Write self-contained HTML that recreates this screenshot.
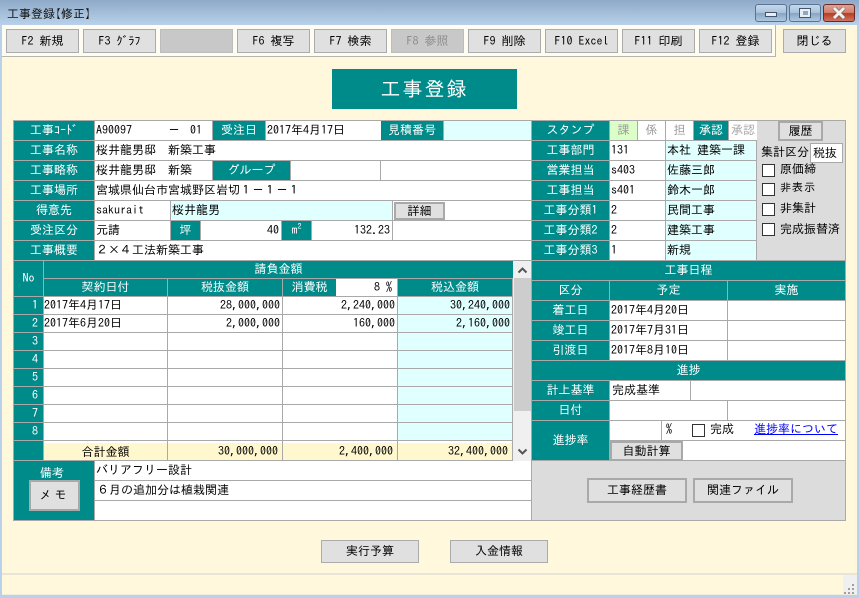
<!DOCTYPE html>
<html lang="ja"><head><meta charset="utf-8"><title>工事登録【修正】</title>
<style>
html,body{margin:0;padding:0;width:859px;height:598px;overflow:hidden;background:#b9d1ea}
body{position:relative;font:12px/19px "IPAGothic","Noto Sans CJK JP","Liberation Sans",sans-serif;color:#000}
div,a{position:absolute;box-sizing:border-box;white-space:nowrap}
.t{background:#008b8b;color:#fff;text-align:center}
.w{background:#fff;padding-left:1px}
.y{background:#e0ffff;padding-left:1px}
.r{text-align:right;padding-right:2px}
.n{padding-right:5px;line-height:17px}
.b{background:#e0e0e0;border:1px solid #ababab;text-align:center}
.b2{background:#e0e0e0;border:2px solid #a9a9a9;text-align:center}
.d{background:#c8c8c8;border-color:#bdbdbd;color:#8c8c8c}
.cb{width:13px;height:13px;background:#fff;border:1px solid #333}
.tl{background:#fff8cf}
</style></head><body>
<div style="left:0;top:0;width:859px;height:25px;background:linear-gradient(#8eaac8,#b9d1ea)"></div>
<div style="left:7px;top:4px;line-height:20px;color:#111">工事登録<span style="margin-left:-6px">【</span>修正<span style="margin-right:-6px">】</span></div>
<div style="left:755px;top:4px;width:32px;height:18px;border:1px solid #5a7390;border-radius:3px;background:linear-gradient(#c6d8ea 0,#a9c3dd 48%,#86a5c4 52%,#afc8e0 100%)"></div>
<div style="left:765px;top:12px;width:12px;height:5px;background:#e8eef4;border:1px solid #44566b"></div>
<div style="left:789px;top:4px;width:32px;height:18px;border:1px solid #5a7390;border-radius:3px;background:linear-gradient(#c6d8ea 0,#a9c3dd 48%,#86a5c4 52%,#afc8e0 100%)"></div>
<div style="left:799px;top:8px;width:12px;height:10px;background:#e8eef4;border:1px solid #44566b"></div>
<div style="left:803px;top:11px;width:5px;height:4px;background:#8ea8c2"></div>
<div style="left:823px;top:4px;width:32px;height:18px;border:1px solid #6b2a2a;border-radius:3px;background:linear-gradient(#dfa193 0,#d27f6c 48%,#b93a22 52%,#cf7660 100%)"></div>
<svg style="position:absolute;left:832px;top:7px" width="14" height="12"><path d="M2 1L12 11M12 1L2 11" stroke="#555" stroke-width="4"/><path d="M2 1L12 11M12 1L2 11" stroke="#f4f0ee" stroke-width="3"/></svg>

<div style="left:2px;top:25px;width:855px;height:570px;background:#fff8dc"></div>
<div style="left:2px;top:25px;width:774px;height:32px;background:#fffdf2;border-bottom:1px solid #b5b5b0;border-right:1px solid #b5b5b0"></div>

<div class="b" style="left:6px;top:29px;width:73px;height:24px;line-height:22px">F2 新規</div>
<div class="b" style="left:83px;top:29px;width:73px;height:24px;line-height:22px">F3 ｸﾞﾗﾌ</div>
<div class="b d" style="left:160px;top:29px;width:73px;height:24px"></div>
<div class="b" style="left:237px;top:29px;width:73px;height:24px;line-height:22px">F6 複写</div>
<div class="b" style="left:314px;top:29px;width:73px;height:24px;line-height:22px">F7 検索</div>
<div class="b d" style="left:391px;top:29px;width:73px;height:24px;line-height:22px">F8 参照</div>
<div class="b" style="left:468px;top:29px;width:73px;height:24px;line-height:22px">F9 削除</div>
<div class="b" style="left:545px;top:29px;width:73px;height:24px;line-height:22px">F10 Excel</div>
<div class="b" style="left:622px;top:29px;width:73px;height:24px;line-height:22px">F11 印刷</div>
<div class="b" style="left:699px;top:29px;width:73px;height:24px;line-height:22px">F12 登録</div>
<div class="b" style="left:783px;top:29px;width:63px;height:24px;line-height:22px">閉じる</div>

<div class="t" style="left:332px;top:69px;width:185px;height:40px;font-size:20px;line-height:40px;letter-spacing:2px">工事登録</div>

<div style="left:13px;top:120px;width:833px;height:401px;background:#a9a9a9"></div>

<!-- left upper -->
<div class="t" style="left:14px;top:121px;width:80px;height:19px">工事ｺｰﾄﾞ</div>
<div class="w" style="left:95px;top:121px;width:117px;height:19px">A90097</div>
<div style="left:168px;top:121px">－</div><div style="left:190px;top:121px">01</div>
<div class="t" style="left:213px;top:121px;width:52px;height:19px">受注日</div>
<div class="w" style="left:266px;top:121px;width:115px;height:19px">2017年4月17日</div>
<div class="t" style="left:381px;top:121px;width:62px;height:19px">見積番号</div>
<div class="y" style="left:444px;top:121px;width:87px;height:19px"></div>

<div class="t" style="left:14px;top:141px;width:80px;height:19px">工事名称</div>
<div class="w" style="left:95px;top:141px;width:436px;height:19px">桜井龍男邸　新築工事</div>

<div class="t" style="left:14px;top:161px;width:80px;height:19px">工事略称</div>
<div class="w" style="left:95px;top:161px;width:117px;height:19px">桜井龍男邸　新築</div>
<div class="t" style="left:213px;top:161px;width:77px;height:19px">グループ</div>
<div class="w" style="left:291px;top:161px;width:89px;height:19px"></div>
<div class="w" style="left:381px;top:161px;width:150px;height:19px"></div>

<div class="t" style="left:14px;top:181px;width:80px;height:19px">工事場所</div>
<div class="w" style="left:95px;top:181px;width:436px;height:19px">宮城県仙台市宮城野区岩切１－１－１</div>

<div class="t" style="left:14px;top:201px;width:80px;height:19px">得意先</div>
<div class="w" style="left:95px;top:201px;width:75px;height:19px">sakurait</div>
<div class="y" style="left:171px;top:201px;width:221px;height:19px">桜井龍男</div>
<div class="w" style="left:393px;top:201px;width:138px;height:19px"></div>
<div class="b2" style="left:394px;top:202px;width:51px;height:18px;line-height:15px">詳細</div>

<div class="t" style="left:14px;top:221px;width:80px;height:19px">受注区分</div>
<div class="w" style="left:95px;top:221px;width:75px;height:19px">元請</div>
<div class="t" style="left:171px;top:221px;width:29px;height:19px">坪</div>
<div class="w r" style="left:201px;top:221px;width:80px;height:19px">40</div>
<div class="t" style="left:282px;top:221px;width:29px;height:19px">m<sup style="font-size:8px;line-height:0">2</sup></div>
<div class="w r" style="left:312px;top:221px;width:80px;height:19px">132.23</div>
<div class="w" style="left:393px;top:221px;width:138px;height:19px"></div>

<div class="t" style="left:14px;top:241px;width:80px;height:19px">工事概要</div>
<div class="w" style="left:95px;top:241px;width:436px;height:19px">２×４工法新築工事</div>

<!-- grid -->
<div class="t" style="left:14px;top:261px;width:29px;height:35px;line-height:35px">No</div>
<div class="t" style="left:44px;top:261px;width:469px;height:17px;line-height:17px">請負金額</div>
<div class="t" style="left:44px;top:279px;width:123px;height:17px;line-height:17px">契約日付</div>
<div class="t" style="left:168px;top:279px;width:114px;height:17px;line-height:17px">税抜金額</div>
<div class="t" style="left:283px;top:279px;width:53px;height:17px;line-height:17px">消費税</div>
<div class="w r" style="left:336px;top:279px;width:61px;height:17px;line-height:17px;padding-right:5px">8 %</div>
<div class="t" style="left:398px;top:279px;width:114px;height:17px;line-height:17px">税込金額</div>

<div class="t r n" style="left:14px;top:297px;width:29px;height:17px">1</div>
<div class="w" style="left:44px;top:297px;width:123px;height:17px;line-height:17px;padding-left:0">2017年4月17日</div>
<div class="w r" style="left:168px;top:297px;width:114px;height:17px;line-height:17px">28,000,000</div>
<div class="w r" style="left:283px;top:297px;width:114px;height:17px;line-height:17px">2,240,000</div>
<div class="y r" style="left:398px;top:297px;width:114px;height:17px;line-height:17px">30,240,000</div>

<div class="t r n" style="left:14px;top:315px;width:29px;height:17px">2</div>
<div class="w" style="left:44px;top:315px;width:123px;height:17px;line-height:17px;padding-left:0">2017年6月20日</div>
<div class="w r" style="left:168px;top:315px;width:114px;height:17px;line-height:17px">2,000,000</div>
<div class="w r" style="left:283px;top:315px;width:114px;height:17px;line-height:17px">160,000</div>
<div class="y r" style="left:398px;top:315px;width:114px;height:17px;line-height:17px">2,160,000</div>

<div class="t r n" style="left:14px;top:333px;width:29px;height:17px">3</div>
<div class="w" style="left:44px;top:333px;width:123px;height:17px"></div><div class="w" style="left:168px;top:333px;width:114px;height:17px"></div><div class="w" style="left:283px;top:333px;width:114px;height:17px"></div><div class="y" style="left:398px;top:333px;width:114px;height:17px"></div>
<div class="t r n" style="left:14px;top:351px;width:29px;height:17px">4</div>
<div class="w" style="left:44px;top:351px;width:123px;height:17px"></div><div class="w" style="left:168px;top:351px;width:114px;height:17px"></div><div class="w" style="left:283px;top:351px;width:114px;height:17px"></div><div class="y" style="left:398px;top:351px;width:114px;height:17px"></div>
<div class="t r n" style="left:14px;top:369px;width:29px;height:17px">5</div>
<div class="w" style="left:44px;top:369px;width:123px;height:17px"></div><div class="w" style="left:168px;top:369px;width:114px;height:17px"></div><div class="w" style="left:283px;top:369px;width:114px;height:17px"></div><div class="y" style="left:398px;top:369px;width:114px;height:17px"></div>
<div class="t r n" style="left:14px;top:387px;width:29px;height:17px">6</div>
<div class="w" style="left:44px;top:387px;width:123px;height:17px"></div><div class="w" style="left:168px;top:387px;width:114px;height:17px"></div><div class="w" style="left:283px;top:387px;width:114px;height:17px"></div><div class="y" style="left:398px;top:387px;width:114px;height:17px"></div>
<div class="t r n" style="left:14px;top:405px;width:29px;height:17px">7</div>
<div class="w" style="left:44px;top:405px;width:123px;height:17px"></div><div class="w" style="left:168px;top:405px;width:114px;height:17px"></div><div class="w" style="left:283px;top:405px;width:114px;height:17px"></div><div class="y" style="left:398px;top:405px;width:114px;height:17px"></div>
<div class="t r n" style="left:14px;top:423px;width:29px;height:17px">8</div>
<div class="w" style="left:44px;top:423px;width:123px;height:17px"></div><div class="w" style="left:168px;top:423px;width:114px;height:17px"></div><div class="w" style="left:283px;top:423px;width:114px;height:17px"></div><div class="y" style="left:398px;top:423px;width:114px;height:17px"></div>

<div class="t" style="left:14px;top:441px;width:29px;height:19px"></div>
<div class="tl" style="left:44px;top:441px;width:123px;height:19px;text-align:center;border-top:2px solid #fff;line-height:19px">合計金額</div>
<div class="tl r" style="left:168px;top:441px;width:114px;height:19px;border-top:2px solid #fff;padding-right:4px;line-height:17px">30,000,000</div>
<div class="tl r" style="left:283px;top:441px;width:114px;height:19px;border-top:2px solid #fff;padding-right:4px;line-height:17px">2,400,000</div>
<div class="tl r" style="left:398px;top:441px;width:114px;height:19px;border-top:2px solid #fff;padding-right:4px;line-height:17px">32,400,000</div>

<!-- scrollbar -->
<div style="left:513px;top:261px;width:18px;height:200px;background:#f0f0f0"></div>
<div style="left:514px;top:278px;width:17px;height:133px;background:#cdcdcd"></div>
<svg style="position:absolute;left:517px;top:266px" width="11" height="8"><path d="M1.5 6.5L5.5 2.5L9.5 6.5" fill="none" stroke="#555" stroke-width="2"/></svg>
<svg style="position:absolute;left:517px;top:448px" width="11" height="8"><path d="M1.5 1.5L5.5 5.5L9.5 1.5" fill="none" stroke="#555" stroke-width="2"/></svg>

<!-- memo -->
<div class="t" style="left:14px;top:461px;width:80px;height:59px;line-height:22px;padding-top:1px;padding-right:4px">備考</div>
<div class="b2" style="left:29px;top:480px;width:51px;height:31px;line-height:27px;letter-spacing:3px">メモ</div>
<div class="w" style="left:95px;top:461px;width:436px;height:19px">バリアフリー設計</div>
<div class="w" style="left:95px;top:481px;width:436px;height:19px;padding-left:2px">６月の追加分は植栽関連</div>
<div class="w" style="left:95px;top:501px;width:436px;height:19px"></div>

<!-- right upper -->
<div class="t" style="left:532px;top:121px;width:77px;height:19px">スタンプ</div>
<div style="left:610px;top:121px;width:27px;height:19px;background:#dcffc8;color:#999;text-align:center">課</div>
<div style="left:638px;top:121px;width:27px;height:19px;background:#fff;color:#999;text-align:center">係</div>
<div style="left:666px;top:121px;width:27px;height:19px;background:#fff;color:#999;text-align:center">担</div>
<div class="t" style="left:694px;top:121px;width:34px;height:19px">承認</div>
<div style="left:729px;top:121px;width:28px;height:19px;background:#fff;color:#aaa;text-align:center">承認</div>
<div style="left:757px;top:121px;width:88px;height:139px;background:#dcdcdc"></div>
<div class="b2" style="left:778px;top:121px;width:45px;height:20px;line-height:16px">履歴</div>

<div class="t" style="left:532px;top:141px;width:77px;height:19px">工事部門</div>
<div class="w" style="left:610px;top:141px;width:55px;height:19px">131</div>
<div class="y" style="left:666px;top:141px;width:90px;height:19px">本社 建築一課</div>
<div class="t" style="left:532px;top:161px;width:77px;height:19px">営業担当</div>
<div class="w" style="left:610px;top:161px;width:55px;height:19px">s403</div>
<div class="y" style="left:666px;top:161px;width:90px;height:19px">佐藤三郎</div>
<div class="t" style="left:532px;top:181px;width:77px;height:19px">工事担当</div>
<div class="w" style="left:610px;top:181px;width:55px;height:19px">s401</div>
<div class="y" style="left:666px;top:181px;width:90px;height:19px">鈴木一郎</div>
<div class="t" style="left:532px;top:201px;width:77px;height:19px">工事分類1</div>
<div class="w" style="left:610px;top:201px;width:55px;height:19px">2</div>
<div class="y" style="left:666px;top:201px;width:90px;height:19px">民間工事</div>
<div class="t" style="left:532px;top:221px;width:77px;height:19px">工事分類2</div>
<div class="w" style="left:610px;top:221px;width:55px;height:19px">2</div>
<div class="y" style="left:666px;top:221px;width:90px;height:19px">建築工事</div>
<div class="t" style="left:532px;top:241px;width:77px;height:19px">工事分類3</div>
<div class="w" style="left:610px;top:241px;width:55px;height:19px">1</div>
<div class="y" style="left:666px;top:241px;width:90px;height:19px">新規</div>

<div style="left:761px;top:143px">集計区分</div>
<div style="left:810px;top:143px;width:33px;height:20px;background:#fff;border:1px solid #a9a9a9;padding-left:2px;line-height:18px">税抜</div>
<div class="cb" style="left:762px;top:164px"></div><div style="left:780px;top:160px">原価締</div>
<div class="cb" style="left:762px;top:183px"></div><div style="left:780px;top:178px;font-size:11px;letter-spacing:1px">非表示</div>
<div class="cb" style="left:762px;top:203px"></div><div style="left:780px;top:199px">非集計</div>
<div class="cb" style="left:762px;top:223px"></div><div style="left:780px;top:220px">完成振替済</div>

<!-- right lower -->
<div class="t" style="left:532px;top:261px;width:313px;height:19px">工事日程</div>
<div class="t" style="left:532px;top:281px;width:77px;height:19px">区分</div>
<div class="t" style="left:610px;top:281px;width:117px;height:19px">予定</div>
<div class="t" style="left:728px;top:281px;width:117px;height:19px">実施</div>
<div class="t" style="left:532px;top:301px;width:77px;height:19px">着工日</div>
<div class="w" style="left:610px;top:301px;width:117px;height:19px">2017年4月20日</div>
<div class="w" style="left:728px;top:301px;width:117px;height:19px"></div>
<div class="t" style="left:532px;top:321px;width:77px;height:19px">竣工日</div>
<div class="w" style="left:610px;top:321px;width:117px;height:19px">2017年7月31日</div>
<div class="w" style="left:728px;top:321px;width:117px;height:19px"></div>
<div class="t" style="left:532px;top:341px;width:77px;height:19px">引渡日</div>
<div class="w" style="left:610px;top:341px;width:117px;height:19px">2017年8月10日</div>
<div class="w" style="left:728px;top:341px;width:117px;height:19px"></div>
<div class="t" style="left:532px;top:361px;width:313px;height:19px">進捗</div>
<div class="t" style="left:532px;top:381px;width:77px;height:19px">計上基準</div>
<div class="w" style="left:610px;top:381px;width:80px;height:19px;padding-left:2px">完成基準</div>
<div class="w" style="left:691px;top:381px;width:154px;height:19px"></div>
<div class="t" style="left:532px;top:401px;width:77px;height:19px">日付</div>
<div class="w" style="left:610px;top:401px;width:117px;height:19px"></div>
<div class="w" style="left:728px;top:401px;width:117px;height:19px"></div>
<div class="t" style="left:532px;top:421px;width:77px;height:39px;line-height:39px">進捗率</div>
<div class="w" style="left:610px;top:421px;width:51px;height:19px"></div>
<div class="w" style="left:662px;top:421px;width:183px;height:19px"></div>
<div style="left:666px;top:420px">%</div>
<div class="cb" style="left:692px;top:424px"></div>
<div style="left:710px;top:420px">完成</div>
<a href="#" style="left:754px;top:420px;color:#00f;text-decoration:underline">進捗率について</a>
<div class="w" style="left:610px;top:441px;width:235px;height:19px"></div>
<div class="b2" style="left:610px;top:441px;width:73px;height:20px;line-height:16px">自動計算</div>
<div style="left:532px;top:461px;width:313px;height:59px;background:#dcdcdc"></div>
<div class="b2" style="left:587px;top:478px;width:100px;height:25px;line-height:21px">工事経歴書</div>
<div class="b2" style="left:693px;top:478px;width:100px;height:25px;line-height:21px">関連ファイル</div>

<div class="b" style="left:321px;top:540px;width:98px;height:23px;line-height:21px">実行予算</div>
<div class="b" style="left:450px;top:540px;width:98px;height:23px;line-height:21px">入金情報</div>

<!-- status -->
<div style="left:2px;top:573px;width:855px;height:22px;border-top:2px solid #e8e4d8;border-bottom:1px solid #f0ece0;background:#fff8dc"></div>
<div style="left:843px;top:575px;width:14px;height:19px;background:#f0f0f0"></div>
<svg style="position:absolute;left:844px;top:582px" width="12" height="12"><path d="M8 2h2v2H8zM4 6h2v2H4zM8 6h2v2H8zM0 10h2v2H0zM4 10h2v2H4zM8 10h2v2H8z" fill="#a0a0a0"/></svg>
</body></html>
